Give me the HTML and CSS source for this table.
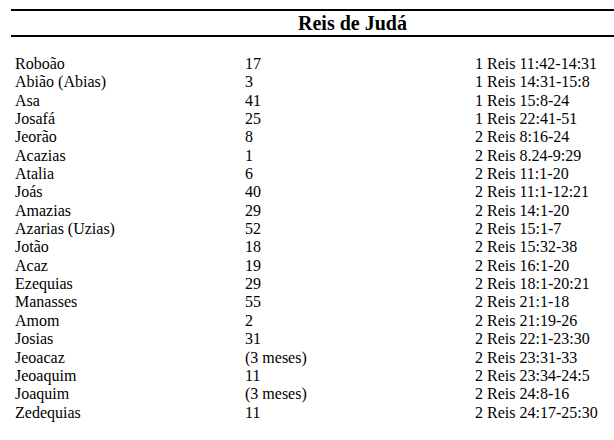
FILE: index.html
```html
<!DOCTYPE html>
<html lang="pt">
<head>
<meta charset="utf-8">
<title>Reis de Judá</title>
<link rel="stylesheet" href="styles.css">
</head>
<body>
<div class="page">
  <div class="header"><h1 class="title">Reis de Judá</h1></div>
  <div class="list">
    <div class="row"><span class="name">Roboão</span><span class="years">17</span><span class="ref">1 Reis 11:42-14:31</span></div>
    <div class="row"><span class="name">Abião (Abias)</span><span class="years">3</span><span class="ref">1 Reis 14:31-15:8</span></div>
    <div class="row"><span class="name">Asa</span><span class="years">41</span><span class="ref">1 Reis 15:8-24</span></div>
    <div class="row"><span class="name">Josafá</span><span class="years">25</span><span class="ref">1 Reis 22:41-51</span></div>
    <div class="row"><span class="name">Jeorão</span><span class="years">8</span><span class="ref">2 Reis 8:16-24</span></div>
    <div class="row"><span class="name">Acazias</span><span class="years">1</span><span class="ref">2 Reis 8.24-9:29</span></div>
    <div class="row"><span class="name">Atalia</span><span class="years">6</span><span class="ref">2 Reis 11:1-20</span></div>
    <div class="row"><span class="name">Joás</span><span class="years">40</span><span class="ref">2 Reis 11:1-12:21</span></div>
    <div class="row"><span class="name">Amazias</span><span class="years">29</span><span class="ref">2 Reis 14:1-20</span></div>
    <div class="row"><span class="name">Azarias (Uzias)</span><span class="years">52</span><span class="ref">2 Reis 15:1-7</span></div>
    <div class="row"><span class="name">Jotão</span><span class="years">18</span><span class="ref">2 Reis 15:32-38</span></div>
    <div class="row"><span class="name">Acaz</span><span class="years">19</span><span class="ref">2 Reis 16:1-20</span></div>
    <div class="row"><span class="name">Ezequias</span><span class="years">29</span><span class="ref">2 Reis 18:1-20:21</span></div>
    <div class="row"><span class="name">Manasses</span><span class="years">55</span><span class="ref">2 Reis 21:1-18</span></div>
    <div class="row"><span class="name">Amom</span><span class="years">2</span><span class="ref">2 Reis 21:19-26</span></div>
    <div class="row"><span class="name">Josias</span><span class="years">31</span><span class="ref">2 Reis 22:1-23:30</span></div>
    <div class="row"><span class="name">Jeoacaz</span><span class="years">(3 meses)</span><span class="ref">2 Reis 23:31-33</span></div>
    <div class="row"><span class="name">Jeoaquim</span><span class="years">11</span><span class="ref">2 Reis 23:34-24:5</span></div>
    <div class="row"><span class="name">Joaquim</span><span class="years">(3 meses)</span><span class="ref">2 Reis 24:8-16</span></div>
    <div class="row"><span class="name">Zedequias</span><span class="years">11</span><span class="ref">2 Reis 24:17-25:30</span></div>
  </div>
</div>
</body>
</html>
```

FILE: styles.css
```css
html, body {
  margin: 0;
  padding: 0;
  background: #ffffff;
}

body {
  font-family: "Liberation Serif", "Times New Roman", serif;
  color: #000000;
  overflow: hidden;
}

.page {
  padding-top: 9px;
  padding-left: 11px;
}

.header {
  border-top: 2px solid #000;
  border-bottom: 2px solid #000;
  height: 24px;
  display: flex;
  align-items: center;
}

.title {
  margin: 0;
  padding-left: 287px;
  font-size: 20px;
  font-weight: bold;
  line-height: 24px;
}

.list {
  padding-top: 18px;
  padding-left: 4px;
}

.row {
  display: grid;
  grid-template-columns: 230px 230px auto;
  font-size: 16px;
  line-height: 18.35px;
  white-space: nowrap;
}
```
